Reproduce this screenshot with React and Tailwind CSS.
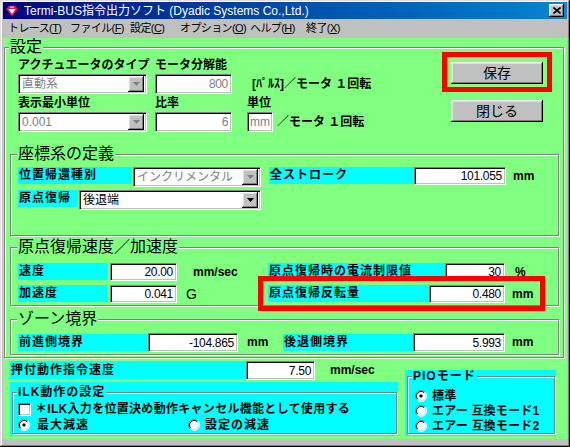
import React from "react";

const sunken =
  "bg-white border border-t-[#808080] border-l-[#808080] border-r-white border-b-white shadow-[inset_1px_1px_0_#000,inset_-1px_-1px_0_#c0c0c0]";
const raised =
  "bg-[#c0c0c0] shadow-[inset_-1px_-1px_0_#000,inset_1px_1px_0_#fff,inset_-2px_-2px_0_#808080,inset_2px_2px_0_#dfdfdf]";
const etched = "border border-[#808080] shadow-[inset_1px_1px_0_#fff,1px_1px_0_#fff]";
const cyan =
  "bg-[#00ffff] h-[17px] leading-[17px] pl-[1px] text-[12px] font-bold tracking-[1px] whitespace-nowrap";
const unit = "text-[12px] font-bold whitespace-nowrap";

function Num({ className, value, muted }) {
  return (
    <div
      className={`${sunken} ${className} flex items-center justify-end pr-[3px] text-[12px] tracking-[-0.3px] ${
        muted ? "text-[#808080]" : "text-black"
      }`}
    >
      {value}
    </div>
  );
}

function Combo({ className, text, disabled }) {
  return (
    <div className={`${sunken} ${className} flex items-center pl-[3px] pr-[2px]`}>
      <span className={`flex-1 text-[12px] whitespace-nowrap ${disabled ? "text-[#808080]" : "text-black"}`}>
        {text}
      </span>
      <div className={`${raised} w-[16px] h-[16px] flex items-center justify-center`}>
        <svg width="7" height="4" viewBox="0 0 7 4">
          <path d="M0 0h7L3.5 4z" fill={disabled ? "#808080" : "#000"} />
        </svg>
      </div>
    </div>
  );
}

function Radio({ checked }) {
  return (
    <svg width="12" height="12" viewBox="0 0 12 12" className="shrink-0">
      <circle cx="6" cy="6" r="5" fill="#fff" />
      <path d="M2.11 9.89A5.5 5.5 0 0 1 9.89 2.11" stroke="#808080" fill="none" />
      <path d="M9.89 2.11A5.5 5.5 0 0 1 2.11 9.89" stroke="#fff" fill="none" />
      <path d="M2.82 9.18A4.5 4.5 0 0 1 9.18 2.82" stroke="#000" fill="none" />
      <path d="M9.18 2.82A4.5 4.5 0 0 1 2.82 9.18" stroke="#dfdfdf" fill="none" />
      {checked && <rect x="4.5" y="4.5" width="3" height="3" rx="1" fill="#000" />}
    </svg>
  );
}

function Checkbox() {
  return <div className={`${sunken} w-[13px] h-[13px] shrink-0`} />;
}

function MenuItem({ className, label, k }) {
  return (
    <span className={`${className} whitespace-nowrap`}>
      {label}(<u>{k}</u>)
    </span>
  );
}

export default function App() {
  return (
    <div className="w-[570px] h-[447px] bg-[#c0c0c0] pt-[2px] px-[3px] pb-[8px] flex flex-col overflow-hidden font-['Liberation_Sans','Noto_Sans_CJK_JP',sans-serif] shadow-[inset_-1px_-1px_0_#000,inset_1px_1px_0_#dfdfdf,inset_-2px_-2px_0_#808080,inset_2px_2px_0_#fff]">
      {/* title bar */}
      <div className="h-[17px] shrink-0 flex items-center bg-linear-to-r from-[#000080] to-[#1084d0] pl-[2px] pr-[2px]">
        <svg width="14" height="14" viewBox="0 0 14 14">
          <path d="M1 5L4 1.5h6L13 5L7 13z" fill="#d81b5a" stroke="#5a0a28" strokeWidth="0.8" />
          <path d="M3.5 5h7L7 10z" fill="#fff" />
          <path d="M4.5 2.5h5L8.5 4h-3z" fill="#ffb0c8" />
        </svg>
        <span className="ml-[5px] text-white text-[12px] whitespace-nowrap">
          Termi-BUS指令出力ソフト (Dyadic Systems Co.,Ltd.)
        </span>
        <div className={`${raised} ml-auto mr-[1px] w-[15px] h-[13px] flex items-center justify-center`}>
          <svg width="8" height="7" viewBox="0 0 8 7">
            <path d="M0.5 0.5L7.5 6.5M7.5 0.5L0.5 6.5" stroke="#000" strokeWidth="1.6" />
          </svg>
        </div>
      </div>

      {/* menu bar */}
      <div className="h-[19px] shrink-0 flex items-center pl-[5px] text-[11px] tracking-[-0.6px] text-black">
        <MenuItem className="w-[62px]" label="トレース" k="T" />
        <MenuItem className="w-[60px]" label="ファイル" k="F" />
        <MenuItem className="w-[50px]" label="設定" k="C" />
        <MenuItem className="w-[70px]" label="オプション" k="O" />
        <MenuItem className="w-[56px]" label="ヘルプ" k="H" />
        <MenuItem className="" label="終了" k="X" />
      </div>

      {/* client area */}
      <div className="flex-1 bg-[#80ff80] flex flex-col text-black">
        <fieldset className={`${etched} ml-[1px] mr-[3px] pb-[2px]`}>
          <legend className="ml-[4px] px-[1px] bg-[#80ff80] text-[16px] leading-[18px]">設定</legend>

          <div className="flex">
            <div className="pl-[13px]">
              <div className="flex mt-[2px] h-[14px] items-center text-[12px] font-bold">
                <span className="w-[137px] whitespace-nowrap">アクチュエータのタイプ</span>
                <span className="whitespace-nowrap">モータ分解能</span>
              </div>
              <div className="flex mt-[2px] h-[20px] items-center">
                <Combo className="w-[129px] h-[20px]" text="直動系" disabled />
                <Num className="w-[77px] h-[20px] ml-[8px]" value="800" muted />
                <span className={`${unit} ml-[20px]`}>[ﾊﾟﾙｽ]／モータ １回転</span>
              </div>
              <div className="flex mt-[2px] h-[14px] items-center text-[12px] font-bold">
                <span className="w-[137px] whitespace-nowrap">表示最小単位</span>
                <span className="w-[92px] whitespace-nowrap">比率</span>
                <span className="whitespace-nowrap">単位</span>
              </div>
              <div className="flex mt-[2px] h-[20px] items-center">
                <Combo className="w-[129px] h-[20px]" text="0.001" disabled />
                <Num className="w-[77px] h-[20px] ml-[8px]" value="6" muted />
                <div className={`${sunken} w-[26px] h-[20px] ml-[15px] flex items-center pl-[2px] text-[12px] text-[#808080]`}>
                  mm
                </div>
                <span className={`${unit} ml-[4px]`}>／モータ １回転</span>
              </div>
            </div>

            <div className="ml-auto mr-[11px] -mt-[4px] flex flex-col">
              <div className="border-[5px] border-[#ff0000] pt-[5px] pb-[3px] px-[4px]">
                <button className={`${raised} w-[92px] h-[22px] flex items-center justify-center text-[14px]`}>
                  保存
                </button>
              </div>
              <button className={`${raised} mt-[8px] ml-[9px] w-[92px] h-[22px] flex items-center justify-center text-[14px]`}>
                閉じる
              </button>
            </div>
          </div>

          {/* 座標系の定義 */}
          <fieldset className={`${etched} ml-[5px] mr-[4px] mt-[13px] pb-[25px]`}>
            <legend className="ml-[6px] px-[1px] bg-[#80ff80] text-[16px] leading-[18px]">座標系の定義</legend>
            <div className="pl-[7px]">
              <div className="flex mt-[4px] h-[20px] items-start">
                <div className={`${cyan} w-[114px]`}>位置帰還種別</div>
                <Combo className="w-[128px] h-[20px] ml-[1px]" text="インクリメンタル" disabled />
                <div className={`${cyan} w-[145px] ml-[8px]`}>全ストローク</div>
                <Num className="w-[92px] h-[18px]" value="101.055" />
                <span className={`${unit} ml-[7px] leading-[18px]`}>mm</span>
              </div>
              <div className="flex mt-[3px] h-[20px] items-start">
                <div className={`${cyan} w-[60px]`}>原点復帰</div>
                <Combo className="w-[182px] h-[20px] ml-[1px]" text="後退端" />
              </div>
            </div>
          </fieldset>

          {/* 原点復帰速度／加速度 */}
          <fieldset className={`${etched} ml-[5px] mr-[4px] mt-[2px] pb-[2px]`}>
            <legend className="ml-[6px] px-[1px] bg-[#80ff80] text-[16px] leading-[18px]">原点復帰速度／加速度</legend>
            <div className="pl-[7px]">
              <div className="flex mt-[7px] h-[18px] items-start">
                <div className="w-[250px] flex items-start">
                  <div className={`${cyan} w-[90px]`}>速度</div>
                  <Num className="w-[67px] h-[18px] ml-[2px]" value="20.00" />
                  <span className={`${unit} ml-[16px] leading-[18px]`}>mm/sec</span>
                </div>
                <div className={`${cyan} w-[177px]`}>原点復帰時の電流制限値</div>
                <Num className="w-[60px] h-[18px]" value="30" />
                <span className={`${unit} ml-[10px] leading-[18px]`}>%</span>
              </div>
              <div className="flex mt-[4px] h-[18px] items-start">
                <div className="w-[250px] flex items-start">
                  <div className={`${cyan} w-[90px]`}>加速度</div>
                  <Num className="w-[67px] h-[18px] ml-[2px]" value="0.041" />
                  <span className="ml-[9px] text-[14px] leading-[18px]">G</span>
                </div>
                <div className="relative flex items-start">
                  <div className={`${cyan} w-[161px]`}>原点復帰反転量</div>
                  <Num className="w-[76px] h-[18px]" value="0.480" />
                  <span className={`${unit} ml-[7px] leading-[18px]`}>mm</span>
                  <div className="absolute left-[-10px] top-[-9px] w-[287px] h-[35px] border-[5px] border-[#ff0000] pointer-events-none" />
                </div>
              </div>
            </div>
          </fieldset>

          {/* ゾーン境界 */}
          <fieldset className={`${etched} ml-[5px] mr-[4px] mt-[4px] pb-[2px]`}>
            <legend className="ml-[6px] px-[1px] bg-[#80ff80] text-[16px] leading-[18px]">ゾーン境界</legend>
            <div className="pl-[7px]">
              <div className="flex mt-[5px] h-[19px] items-start">
                <div className="w-[265px] flex items-start">
                  <div className={`${cyan} w-[130px] mt-[1px]`}>前進側境界</div>
                  <Num className="w-[90px] h-[19px]" value="-104.865" />
                  <span className={`${unit} ml-[9px] leading-[19px]`}>mm</span>
                </div>
                <div className={`${cyan} w-[130px] mt-[1px]`}>後退側境界</div>
                <Num className="w-[92px] h-[19px]" value="5.993" />
                <span className={`${unit} ml-[7px] leading-[19px]`}>mm</span>
              </div>
            </div>
          </fieldset>
        </fieldset>

        {/* bottom area */}
        <div className="flex items-end ml-[7px] mt-[3px]">
          <div className="w-[388px] flex flex-col">
            <div className="flex h-[19px] items-start">
              <div className={`${cyan} w-[236px] h-[18px] leading-[18px]`}>押付動作指令速度</div>
              <Num className="w-[69px] h-[19px]" value="7.50" />
              <span className={`${unit} ml-[15px] leading-[19px]`}>mm/sec</span>
            </div>
            <div className="mt-[2px] h-[54px] bg-[#00ffff] pt-[3px] pb-[2px] pl-[2px] pr-[1px]">
              <fieldset className={`${etched} h-full`}>
                <legend className="ml-[4px] px-[1px] bg-[#00ffff] text-[12px] font-bold leading-[14px] tracking-[1px]">
                  ILK動作の設定
                </legend>
                <div className="pl-[5px]">
                  <div className="flex items-center h-[14px] mt-[3px]">
                    <Checkbox />
                    <span className="ml-[4px] text-[12px] font-bold tracking-[0.3px] whitespace-nowrap">
                      ＊ILK入力を位置決め動作キャンセル機能として使用する
                    </span>
                  </div>
                  <div className="flex items-center h-[13px] mt-[2px]">
                    <div className="w-[170px] flex items-center">
                      <Radio checked />
                      <span className="ml-[7px] text-[12px] font-bold tracking-[1px] whitespace-nowrap">最大減速</span>
                    </div>
                    <Radio />
                    <span className="ml-[5px] text-[12px] font-bold tracking-[1px] whitespace-nowrap">設定の減速</span>
                  </div>
                </div>
              </fieldset>
            </div>
          </div>

          <div className="ml-[7px] w-[151px] h-[66px] bg-[#00ffff] pl-[2px] pr-[1px] pb-[2px]">
            <fieldset className={`${etched} h-full`}>
              <legend className="ml-[4px] px-[1px] bg-[#00ffff] text-[12px] font-bold leading-[12px] tracking-[1px]">
                PIOモード
              </legend>
              <div className="pl-[7px] mt-[6px] flex flex-col text-[12px] font-bold tracking-[0.2px]">
                <div className="flex items-center h-[15px]">
                  <Radio checked />
                  <span className="ml-[5px] whitespace-nowrap">標準</span>
                </div>
                <div className="flex items-center h-[15px]">
                  <Radio />
                  <span className="ml-[5px] whitespace-nowrap">エアー 互換モード1</span>
                </div>
                <div className="flex items-center h-[15px]">
                  <Radio />
                  <span className="ml-[5px] whitespace-nowrap">エアー 互換モード2</span>
                </div>
              </div>
            </fieldset>
          </div>
        </div>
      </div>
    </div>
  );
}
